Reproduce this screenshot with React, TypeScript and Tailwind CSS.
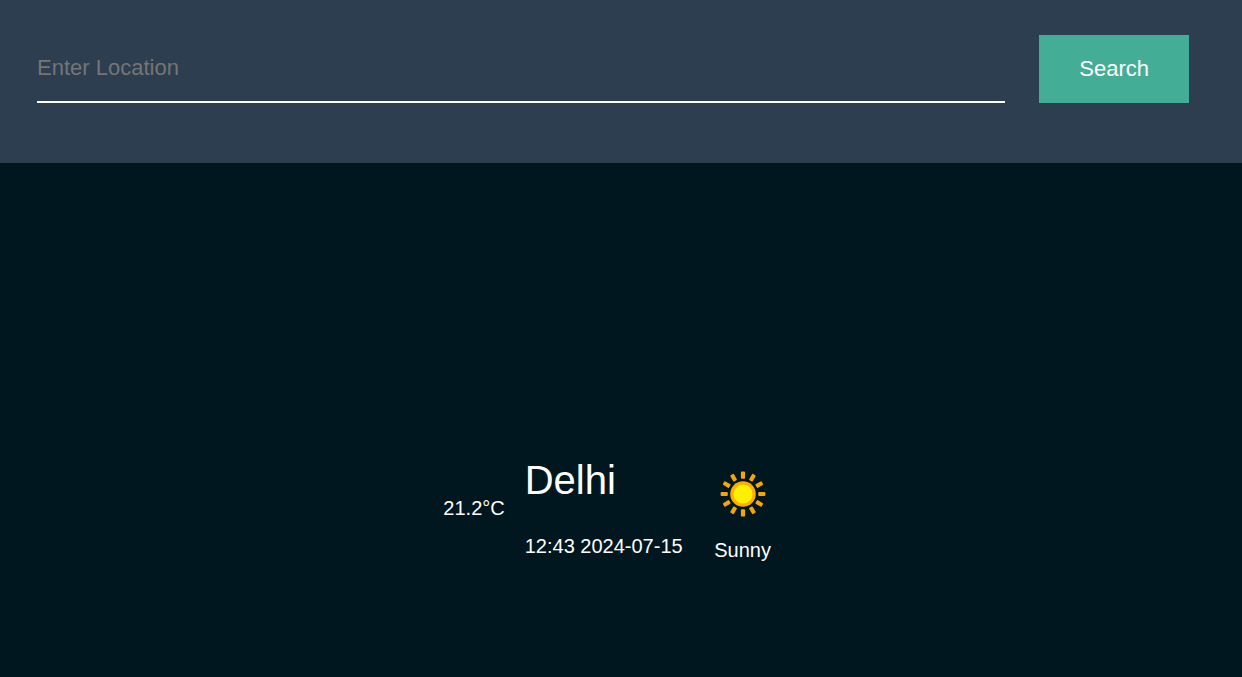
import { useState } from "react";
import type { FormEvent } from "react";

const RAY_ANGLES = [0, 30, 60, 90, 120, 150, 180, 210, 240, 270, 300, 330];

function SunIcon() {
  return (
    <svg viewBox="0 0 64 64" className="size-16" role="img" aria-label="Sunny">
      {RAY_ANGLES.map((angle) => (
        <rect
          key={angle}
          x="29.9"
          y="9.6"
          width="4.2"
          height="7.2"
          rx="1"
          fill="#f2a60a"
          transform={`rotate(${angle} 32 32)`}
        />
      ))}
      <circle cx="32" cy="32" r="12.8" fill="#ffae00" />
      <circle cx="32" cy="32" r="9.6" fill="#fff000" />
    </svg>
  );
}

function SearchBar() {
  const [location, setLocation] = useState("");
  const handleSubmit = (event: FormEvent) => event.preventDefault();

  return (
    <header className="bg-[#2d3e50] pt-[35px] pr-[53px] pb-[60px] pl-[37px]">
      <form onSubmit={handleSubmit} className="flex gap-[34px]">
        <input
          type="text"
          aria-label="Location"
          placeholder="Enter Location"
          value={location}
          onChange={(event) => setLocation(event.target.value)}
          className="h-[68px] min-w-0 flex-1 border-b-2 border-white bg-transparent text-[22px] text-white outline-none placeholder:text-[#757575]"
        />
        <button type="submit" className="h-[68px] bg-[#44ad96] px-10 pb-0.5 text-[22px] text-white">
          Search
        </button>
      </form>
    </header>
  );
}

function CurrentWeather() {
  return (
    <section className="flex items-center justify-center pr-6 text-xl leading-6">
      <p>21.2°C</p>
      <div className="mr-7 ml-5">
        <h1 className="text-[40px] leading-[44px]">Delhi</h1>
        <p className="mt-8">12:43 2024-07-15</p>
      </div>
      <div className="flex flex-col items-center gap-3 pt-2">
        <SunIcon />
        <p>Sunny</p>
      </div>
    </section>
  );
}

export default function App() {
  return (
    <div className="flex min-h-screen flex-col bg-[#00171f] font-['Liberation_Sans',Arial,sans-serif] text-white">
      <SearchBar />
      <main className="flex-1 pt-[291px] pb-10">
        <CurrentWeather />
      </main>
    </div>
  );
}
